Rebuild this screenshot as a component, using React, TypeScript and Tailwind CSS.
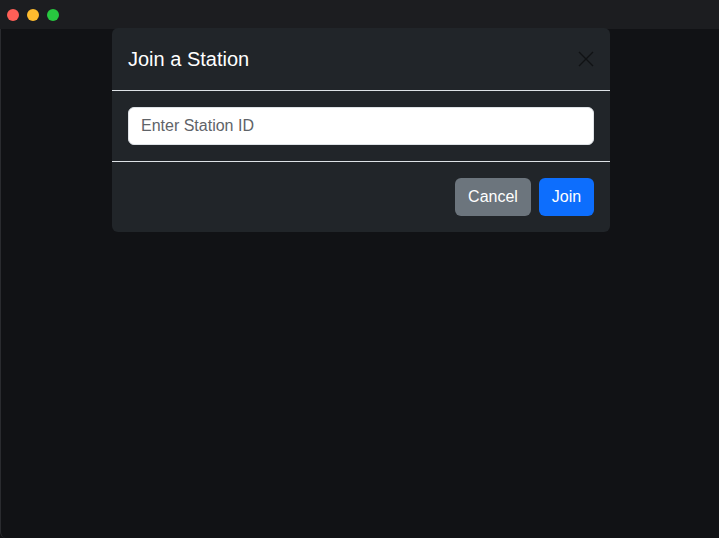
export default function App() {
  return (
    <div className="flex h-[538px] w-[719px] flex-col bg-[#111215] font-['Liberation_Sans',Arial,sans-serif]">
      {/* TITLE BAR */}
      <div className="flex h-[29px] shrink-0 items-center gap-[8px] bg-[#1c1d20] pl-[7px]">
        <span className="h-[12px] w-[12px] rounded-full bg-[#fe5f57]" />
        <span className="h-[12px] w-[12px] rounded-full bg-[#febc2e]" />
        <span className="h-[12px] w-[12px] rounded-full bg-[#28c840]" />
      </div>

      {/* BODY */}
      <div className="flex-1 rounded-bl-[6px] border-l border-[#2a2b2f] bg-[#111215]">
        <div className="-mt-px ml-[111px] w-[498px] rounded-[6px] bg-[#212529] text-white">
          {/* HEADER */}
          <div className="flex h-[63px] items-center justify-between border-b border-[#dee2e6] px-[16px]">
            <h1 className="text-[20px] leading-[30px]">Join a Station</h1>
            <button className="flex h-[16px] w-[16px] items-center justify-center text-[#0a0b0c] opacity-70">
              <svg width="16" height="16" viewBox="0 0 16 16" fill="none" stroke="currentColor" strokeWidth="1.4">
                <path d="M1 1L15 15M15 1L1 15" />
              </svg>
            </button>
          </div>

          {/* INPUT */}
          <div className="border-b border-[#dee2e6] p-[16px]">
            <input
              placeholder="Enter Station ID"
              className="h-[38px] w-full rounded-[6px] border border-[#dee2e6] bg-white px-[12px] text-[16px] text-[#212529] outline-none placeholder:text-[#5f6368]"
            />
          </div>

          {/* FOOTER */}
          <div className="flex h-[70px] items-center justify-end gap-[8px] px-[16px]">
            <button className="h-[38px] w-[76px] rounded-[6px] bg-[#6c757d] text-[16px] text-white">
              Cancel
            </button>
            <button className="h-[38px] w-[55px] rounded-[6px] bg-[#0d6efd] text-[16px] text-white">
              Join
            </button>
          </div>
        </div>
      </div>
    </div>
  );
}
